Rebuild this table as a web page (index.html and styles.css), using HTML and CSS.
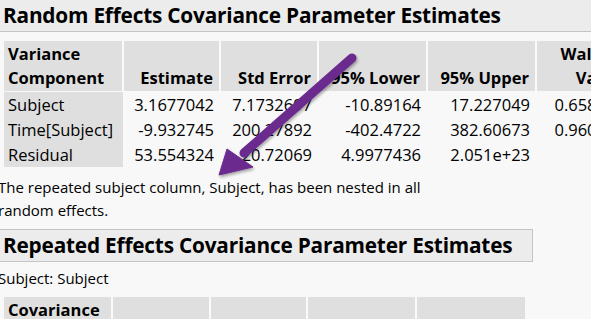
FILE: index.html
```html
<!DOCTYPE html>
<html>
<head>
<meta charset="utf-8">
<link rel="stylesheet" href="styles.css">
</head>
<body>
<div class="page">
  <h2 class="title title-main">Random Effects Covariance Parameter Estimates</h2>
  <table class="grid grid-random">
    <colgroup>
      <col class="c1"><col class="c2"><col class="c3"><col class="c4"><col class="c5"><col class="c6">
    </colgroup>
    <thead>
      <tr>
        <th class="lbl">Variance<br>Component</th>
        <th>Estimate</th>
        <th>Std Error</th>
        <th>95% Lower</th>
        <th>95% Upper</th>
        <th class="pvh">Wald p-<br>Value</th>
      </tr>
    </thead>
    <tbody>
      <tr><td class="lbl">Subject</td><td>3.1677042</td><td>7.1732697</td><td>-10.89164</td><td>17.227049</td><td class="pv">0.6581</td></tr>
      <tr><td class="lbl">Time[Subject]</td><td>-9.932745</td><td>200.27892</td><td>-402.4722</td><td>382.60673</td><td class="pv">0.9604</td></tr>
      <tr><td class="lbl">Residual</td><td>53.554324</td><td>20.72069</td><td>4.9977436</td><td>2.051e+23</td><td class="pv"></td></tr>
    </tbody>
  </table>
  <p class="note">The repeated subject column, Subject, has been nested in all random effects.</p>
  <h2 class="title title-box">Repeated Effects Covariance Parameter Estimates</h2>
  <p class="subj">Subject: Subject</p>
  <table class="grid grid-repeated">
    <colgroup>
      <col class="r1"><col class="r2"><col class="r3"><col class="r4"><col class="r5">
    </colgroup>
    <thead>
      <tr><th class="lbl">Covariance</th><th></th><th></th><th></th><th></th></tr>
    </thead>
  </table>
  <svg class="arrow" width="591" height="319" viewBox="0 0 591 319">
    <defs>
      <filter id="sh" x="-20%" y="-20%" width="140%" height="140%">
        <feGaussianBlur in="SourceAlpha" stdDeviation="1.5"/>
        <feOffset dx="1" dy="2"/>
        <feComponentTransfer><feFuncA type="linear" slope="0.35"/></feComponentTransfer>
        <feMerge><feMergeNode/><feMergeNode in="SourceGraphic"/></feMerge>
      </filter>
    </defs>
    <g filter="url(#sh)" fill="#6a2a8e" stroke="#6a2a8e">
      <line x1="352" y1="58" x2="244" y2="153" stroke-width="9" stroke-linecap="round"/>
      <polygon points="219,175 227,149 253,167" stroke-width="1" stroke-linejoin="round"/>
    </g>
  </svg>
</div>
</body>
</html>
```
FILE: styles.css
```css
html, body {
  margin: 0;
  padding: 0;
  overflow: hidden;
  background: #f8f8f8;
}
.page {
  position: relative;
  width: 591px;
  height: 319px;
  overflow: hidden;
  font-family: "Open Sans", "Noto Sans", sans-serif;
  font-size: 15px;
  color: #000;
}
.title {
  margin: 0;
  font-weight: 700;
  font-size: 20.8px;
  letter-spacing: -0.2px;
  white-space: nowrap;
}
.title-main {
  background: #ececec;
  border-bottom: 1px solid #c4c4c4;
  height: 32px;
  line-height: 30px;
  padding-left: 3px;
  box-sizing: border-box;
}
.grid {
  border-collapse: collapse;
  table-layout: fixed;
  margin-left: 4px;
  font-size: 16.5px;
}
.grid-random {
  margin-top: 9px;
  width: 620px;
}
.c1 { width: 119px; }
.c2 { width: 97px; }
.c3 { width: 98px; }
.c4 { width: 109px; }
.c5 { width: 109px; }
.c6 { width: 88px; }
.grid th {
  background: #dfdfdf;
  font-weight: 700;
  text-align: right;
  vertical-align: bottom;
  padding: 1px 6px 1px 4px;
  line-height: 24px;
  border-left: 2px solid #fafafa;
  white-space: nowrap;
}
.grid th:first-child { border-left: none; }
.grid th.lbl { text-align: left; }
.grid th.pvh { padding-right: 2px; }
.grid td {
  text-align: right;
  padding: 0 6px 0 4px;
  line-height: 25px;
  white-space: nowrap;
}
.grid td.lbl {
  text-align: left;
  background: #dfdfdf;
}
.grid tbody tr:first-child td { border-top: 1px solid #f8f8f8; }
.grid td.pv { padding-right: 18px; }
.note {
  margin: 9px 0 0 -2px;
  width: 440px;
  line-height: 23px;
}
.title-box {
  margin: 7px 0 0 -4px;
  width: 537px;
  height: 33px;
  box-sizing: border-box;
  border: 1px solid #c4c4c4;
  background: #ececec;
  line-height: 30px;
  padding-left: 6px;
}
.subj {
  margin: 3px 0 0 -2px;
  line-height: 26px;
}
.grid-repeated {
  margin-top: 6px;
  width: 521px;
}
.r1 { width: 108px; }
.r2 { width: 98px; }
.r3 { width: 97px; }
.r4 { width: 109px; }
.r5 { width: 109px; }
.arrow {
  position: absolute;
  left: 0;
  top: 0;
  pointer-events: none;
}
```
